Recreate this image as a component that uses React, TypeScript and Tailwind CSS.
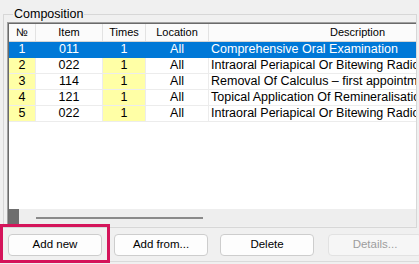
import React from 'react';

type Row = { no: string; item: string; times: string; location: string; desc: string };

const rows: Row[] = [
  { no: '1', item: '011', times: '1', location: 'All', desc: 'Comprehensive Oral Examination' },
  { no: '2', item: '022', times: '1', location: 'All', desc: 'Intraoral Periapical Or Bitewing Radiograph' },
  { no: '3', item: '114', times: '1', location: 'All', desc: 'Removal Of Calculus – first appointment' },
  { no: '4', item: '121', times: '1', location: 'All', desc: 'Topical Application Of Remineralisation Agent' },
  { no: '5', item: '022', times: '1', location: 'All', desc: 'Intraoral Periapical Or Bitewing Radiograph' },
];

function HeaderCell({ w, children }: { w: string; children: React.ReactNode }) {
  return (
    <div className={`${w} shrink-0 h-full flex items-center justify-center border-r border-[#e3e3e3]`}>
      {children}
    </div>
  );
}

function GridRow({ row, selected }: { row: Row; selected: boolean }) {
  const text = selected ? 'text-white' : 'text-black';
  const base = selected ? 'bg-[#0078d7]' : 'bg-white';
  const yellow = selected ? 'bg-[#0078d7]' : 'bg-[#ffffa6]';
  const sep = selected ? 'border-[#0078d7]' : 'border-[#ececec]';
  return (
    <div className={`flex h-[16px] ${text} ${base} border-b ${sep}`}>
      <div className={`w-[27px] shrink-0 flex items-center justify-center border-r ${sep} ${yellow}`}>{row.no}</div>
      <div className={`w-[67px] shrink-0 flex items-center justify-center border-r ${sep}`}>{row.item}</div>
      <div className={`w-[43px] shrink-0 flex items-center justify-center border-r ${sep} ${yellow}`}>{row.times}</div>
      <div className={`w-[63px] shrink-0 flex items-center justify-center border-r ${sep}`}>{row.location}</div>
      <div className="w-[298px] shrink-0 flex items-center pl-[2px] whitespace-nowrap overflow-hidden">{row.desc}</div>
    </div>
  );
}

function Btn({ label, disabled }: { label: string; disabled?: boolean }) {
  return (
    <div
      className={`w-[94px] h-[22px] shrink-0 rounded-[4px] border flex items-center justify-center text-[11.5px] ${
        disabled
          ? 'border-[#e2e2e2] bg-[#f6f6f6] text-[#9d9d9d]'
          : 'border-[#cdcdcd] bg-[#fdfdfd] text-black'
      }`}
    >
      {label}
    </div>
  );
}

export default function App() {
  return (
    <div
      className="relative w-[419px] h-[264px] bg-[#f0f0f0] overflow-hidden pt-[14px] pl-[3px]"
      style={{ fontFamily: '"Liberation Sans", Arial, sans-serif' }}
    >
      {/* Group box */}
      <div className="relative w-[414px] h-[214px] border border-[#d7d7d7] pt-[7px] pl-[3px]">
        <span className="absolute -top-[9px] left-[9px] bg-[#f0f0f0] px-[1px] text-[12.5px] leading-[16px] text-black">
          Composition
        </span>

        {/* Grid */}
        <div className="w-[409px] h-[204px] border-l border-t border-[#a0a0a0] bg-white overflow-hidden">
          <div className="h-full border-l border-t border-[#6a6a6a] flex flex-col">
            <div className="flex h-[18px] bg-[#fbfbfb] border-b border-[#d5d5d5] text-[11px] text-black">
              <HeaderCell w="w-[27px]">№</HeaderCell>
              <HeaderCell w="w-[67px]">Item</HeaderCell>
              <HeaderCell w="w-[43px]">Times</HeaderCell>
              <HeaderCell w="w-[63px]">Location</HeaderCell>
              <HeaderCell w="w-[298px]">Description</HeaderCell>
            </div>
            <div className="text-[12.5px] leading-[15px]">
              {rows.map((r, i) => (
                <GridRow key={i} row={r} selected={i === 0} />
              ))}
            </div>
            <div className="flex-1" />
            {/* horizontal scrollbar */}
            <div className="flex h-[17px] bg-[#eeeeee]">
              <div className="w-[10px] h-full bg-[#6e6e6e]" />
              <div className="flex-1 pt-[8px] pl-[17px]">
                <div className="w-[167px] h-[2px] bg-[#8a8a8a]" />
              </div>
            </div>
          </div>
        </div>
      </div>

      {/* Buttons */}
      <div className="flex gap-[12px] pt-[6px] pl-[5px] pb-[5px] border-b border-[#dadada] w-[416px]">
        <Btn label="Add new" />
        <Btn label="Add from..." />
        <Btn label="Delete" />
        <div className="ml-[2px]">
          <Btn label="Details..." disabled />
        </div>
      </div>

      {/* highlight */}
      <div className="absolute left-0 top-[224px] w-[110px] h-[39px] border-[3px] border-[#d4145a]" />
    </div>
  );
}
